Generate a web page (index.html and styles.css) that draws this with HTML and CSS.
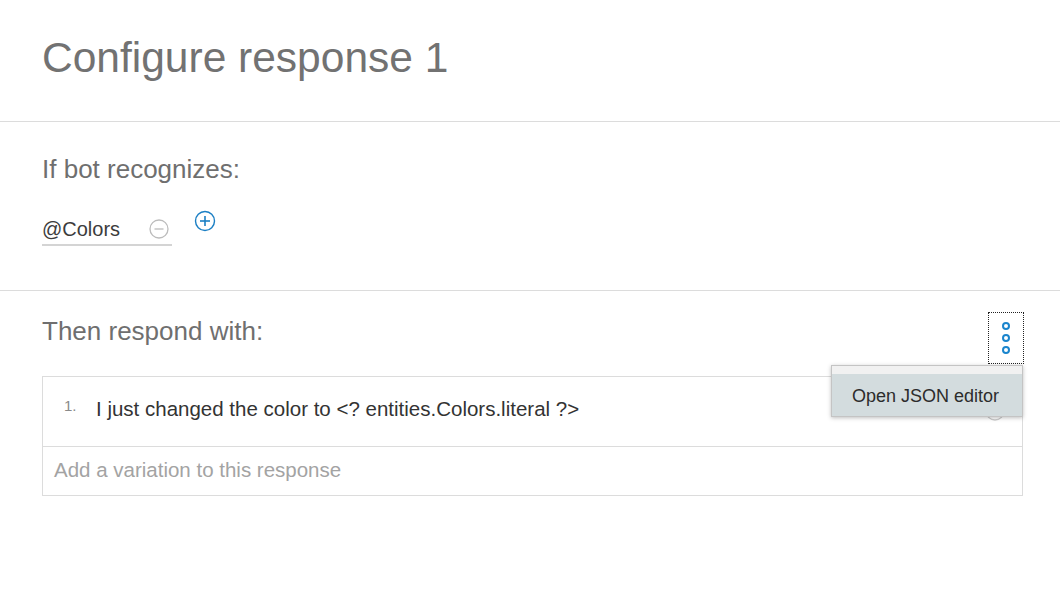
FILE: index.html
```html
<!DOCTYPE html>
<html>
<head>
<meta charset="utf-8">
<link rel="stylesheet" href="styles.css">
</head>
<body>
<header class="header">
  <h1 class="title">Configure response 1</h1>
</header>
<section class="condition">
  <h2 class="heading">If bot recognizes:</h2>
  <div class="cond-row">
    <div class="cond-input">
      <span class="cond-text">@Colors</span>
      <svg class="minus" width="20" height="20" viewBox="0 0 20 20"><circle cx="10" cy="10" r="9" fill="none" stroke="#bcbcbc" stroke-width="1.3"/><line x1="5.5" y1="10" x2="14.5" y2="10" stroke="#bcbcbc" stroke-width="1.3"/></svg>
    </div>
    <svg class="plus" width="22" height="22" viewBox="0 0 22 22"><circle cx="11" cy="11" r="9.5" fill="none" stroke="#1b7fc4" stroke-width="1.4"/><line x1="6" y1="11" x2="16" y2="11" stroke="#1b7fc4" stroke-width="1.6"/><line x1="11" y1="6" x2="11" y2="16" stroke="#1b7fc4" stroke-width="1.6"/></svg>
  </div>
</section>
<section class="respond">
  <div class="respond-head">
    <h2 class="heading heading-respond">Then respond with:</h2>
    <div class="kebab-wrap">
      <button class="kebab" type="button">
        <svg width="12" height="36" viewBox="0 0 12 36"><circle cx="6" cy="6" r="3" fill="none" stroke="#1a85cd" stroke-width="2"/><circle cx="6" cy="18" r="3" fill="none" stroke="#1a85cd" stroke-width="2"/><circle cx="6" cy="30" r="3" fill="none" stroke="#1a85cd" stroke-width="2"/></svg>
      </button>
      <div class="menu">
        <div class="menu-strip"></div>
        <div class="menu-item">Open JSON editor</div>
      </div>
    </div>
  </div>
  <div class="box">
    <div class="variation">
      <span class="num">1.</span>
      <span class="var-text">I just changed the color to &lt;? entities.Colors.literal ?&gt;</span>
      <svg class="remove" width="20" height="20" viewBox="0 0 20 20"><circle cx="10" cy="10" r="9" fill="none" stroke="#cccccc" stroke-width="1.3"/><line x1="5.5" y1="10" x2="14.5" y2="10" stroke="#cccccc" stroke-width="1.3"/></svg>
    </div>
    <div class="add">Add a variation to this response</div>
  </div>
</section>
</body>
</html>
```
FILE: styles.css
```css
* { box-sizing: border-box; }
html, body {
  margin: 0;
  padding: 0;
  background: #ffffff;
  font-family: "Liberation Sans", Arial, sans-serif;
}
.header {
  height: 122px;
  padding: 37px 42px 0;
  border-bottom: 1px solid #dcdcdc;
}
.title {
  margin: 0;
  font-size: 42.5px;
  line-height: 42px;
  font-weight: normal;
  color: #727272;
}
.condition {
  height: 169px;
  padding: 32px 42px 0;
  border-bottom: 1px solid #dcdcdc;
}
.heading {
  margin: 0;
  font-size: 26px;
  line-height: 30px;
  font-weight: normal;
  color: #6f6f6f;
}
.cond-row {
  display: flex;
  align-items: flex-start;
  margin-top: 33px;
}
.cond-input {
  width: 130px;
  height: 29px;
  display: flex;
  align-items: flex-start;
  justify-content: space-between;
  border-bottom: 2px solid #d4d4d4;
}
.cond-text {
  font-size: 20px;
  line-height: 24px;
  color: #3c3c3c;
}
.minus {
  margin-top: 2px;
  margin-right: 3px;
}
.plus {
  margin-left: 22px;
  margin-top: -7px;
}
.respond {
  padding: 21px 36px 0 42px;
}
.respond-head {
  display: flex;
  justify-content: space-between;
  align-items: flex-start;
  height: 52px;
}
.heading-respond {
  margin-top: 4px;
}
.kebab-wrap {
  position: relative;
}
.kebab {
  display: flex;
  align-items: center;
  justify-content: center;
  width: 36px;
  height: 52px;
  padding: 0;
  background: #ffffff;
  border: 1px dotted #222222;
}
.menu {
  position: absolute;
  top: 53px;
  right: 1px;
  width: 192px;
  background: #d3dcde;
  border: 1px solid #c4c4c4;
  box-shadow: 0 1px 4px rgba(0, 0, 0, 0.25);
  z-index: 2;
}
.menu-strip {
  height: 8px;
  background: #f1f1f1;
}
.menu-item {
  height: 42px;
  padding: 11px 0 0 20px;
  font-size: 18px;
  line-height: 22px;
  color: #2c2c2c;
}
.box {
  margin-top: 12px;
  margin-right: 1px;
  border: 1px solid #dcdcdc;
}
.variation {
  height: 70px;
  display: flex;
  align-items: flex-start;
  padding: 20px 0 0 21px;
  border-bottom: 1px solid #dcdcdc;
  position: relative;
}
.num {
  width: 32px;
  font-size: 15px;
  line-height: 16px;
  margin-top: 1px;
  color: #8a8a8a;
}
.var-text {
  font-size: 20.5px;
  line-height: 24px;
  color: #333333;
}
.remove {
  margin-left: auto;
  margin-right: 17px;
  margin-top: 4px;
}
.add {
  height: 48px;
  padding: 11px 0 0 11px;
  font-size: 20.5px;
  line-height: 24px;
  color: #a3a3a3;
}
```
